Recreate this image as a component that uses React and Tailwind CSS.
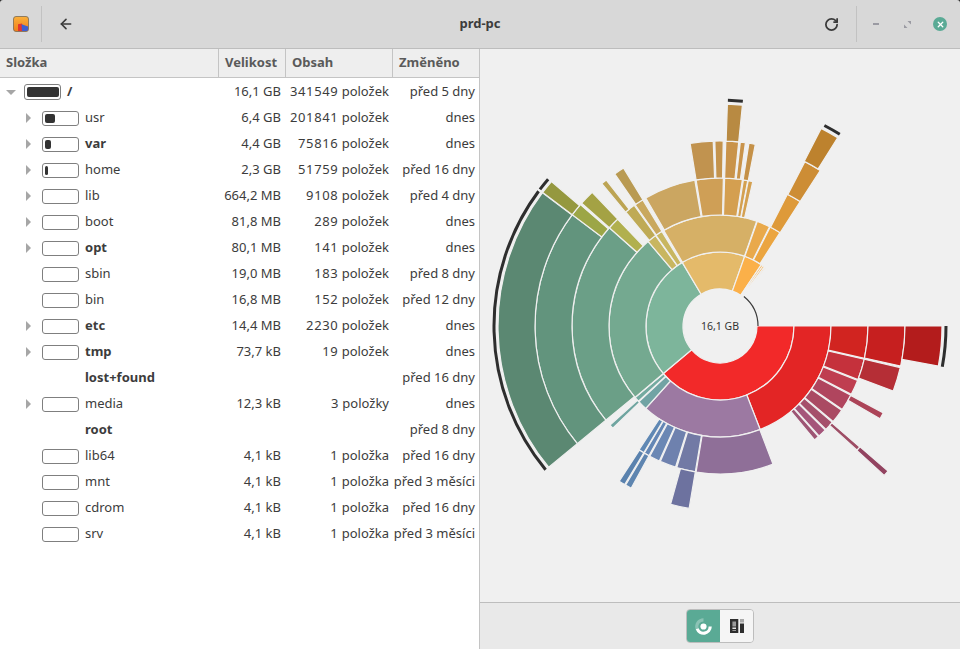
import React from "react";
import { ArrowLeft, RotateCw, X } from "lucide-react";

const CX = 240;
const CY = 277;
const RING = 37;

// [ring, from, to, colour] — angles clockwise from 3 o'clock
const SEGMENTS = [
  // ring 1
  [1, 0, 140, "#f22929"],
  [1, 140, 239.3, "#7db59b"],
  [1, 239.3, 289.5, "#e4ba6a"],
  [1, 289.5, 304, "#fbb049"],
  [1, 304, 305.5, "#fbb049"],
  [1, 305.5, 307, "#fbb049"],
  [1, 307, 308, "#fbb049"],
  // ring 2
  [2, 0, 68.8, "#e32525"],
  [2, 68.8, 132, "#9c79a2"],
  [2, 132, 137, "#71a3a4"],
  [2, 137.3, 139.8, "#74aaa0"],
  [2, 140, 229.6, "#74a990"],
  [2, 229.6, 234.5, "#c8b660"],
  [2, 234.8, 238.4, "#c8b660"],
  [2, 239.5, 289.3, "#d6b066"],
  [2, 289.6, 296.5, "#e9a94b"],
  [2, 296.9, 302.7, "#eba540"],
  // ring 3
  [3, 0, 12.6, "#d12420"],
  [3, 13, 21.2, "#c5313c"],
  [3, 21.6, 27.5, "#bf3e50"],
  [3, 27.9, 34.3, "#b0455e"],
  [3, 34.7, 40.2, "#aa4a63"],
  [3, 40.6, 44.3, "#a5506b"],
  [3, 44.7, 48, "#a5557a"],
  [3, 48.3, 50.3, "#9e5574"],
  [3, 69, 99.3, "#8f6f98"],
  [3, 99.6, 107, "#727aa5"],
  [3, 107.5, 113.8, "#6e81ae"],
  [3, 114.2, 118.3, "#6a87b4"],
  [3, 118.7, 120.8, "#6487b5"],
  [3, 121, 123.2, "#5f88b4"],
  [3, 136.4, 138, "#6fa5a0"],
  [3, 140.5, 221.6, "#6b9f87"],
  [3, 221.6, 226.2, "#b1b04e"],
  [3, 230.4, 234.6, "#bfaa55"],
  [3, 235, 238.5, "#c9a85e"],
  [3, 239.9, 260.2, "#cba661"],
  [3, 260.7, 271.3, "#cf9f56"],
  [3, 271.8, 278.7, "#d49f50"],
  [3, 279.1, 280.8, "#d4a050"],
  [3, 281, 282.8, "#d4a050"],
  [3, 297.1, 302.8, "#de9a3a"],
  // ring 4
  [4, 0, 12.5, "#c61f1f"],
  [4, 13, 20.6, "#b52e36"],
  [4, 28, 30.1, "#ac4458"],
  [4, 40.9, 42.2, "#9e4d65"],
  [4, 99.6, 105.5, "#6d729f"],
  [4, 118.7, 120.7, "#5e85b0"],
  [4, 121, 123, "#5a82ae"],
  [4, 140.5, 217, "#62947d"],
  [4, 217, 221, "#9ca646"],
  [4, 221.6, 226.3, "#a4a244"],
  [4, 230.3, 232.1, "#bca453"],
  [4, 235.3, 238.6, "#b99a52"],
  [4, 260.7, 267.9, "#c1934f"],
  [4, 268.4, 271, "#c4934c"],
  [4, 271.8, 275.8, "#c9934a"],
  [4, 276.3, 277.9, "#c9934a"],
  [4, 279, 281, "#c59148"],
  [4, 297.3, 302.8, "#cd8d35"],
  // ring 5
  [5, 0, 10.4, "#b31c1c"],
  [5, 40.8, 42.3, "#924360"],
  [5, 140.5, 216.9, "#5b8872"],
  [5, 217, 220.6, "#95983f"],
  [5, 271.9, 275.8, "#b88a42"],
  [5, 297.1, 302, "#bd822e"],
];

// arcs over children that are too small to draw
const HIDDEN_ARCS = [
  [226, 0, 10.4],
  [226, 140.5, 216.6],
  [226, 217.2, 220.5],
  [226, 272, 275.8],
  [226, 297.5, 302],
];

const ROWS = [
  { name: "/", size: "16,1 GB", items: "341549 položek", changed: "před 5 dny", bold: true, fill: 32, root: true },
  { name: "usr", size: "6,4 GB", items: "201841 položek", changed: "dnes", fill: 10, arrow: true },
  { name: "var", size: "4,4 GB", items: "75816 položek", changed: "dnes", fill: 6, arrow: true, bold: true },
  { name: "home", size: "2,3 GB", items: "51759 položek", changed: "před 16 dny", fill: 3, arrow: true },
  { name: "lib", size: "664,2 MB", items: "9108 položek", changed: "před 4 dny", arrow: true },
  { name: "boot", size: "81,8 MB", items: "289 položek", changed: "dnes", arrow: true },
  { name: "opt", size: "80,1 MB", items: "141 položek", changed: "dnes", arrow: true, bold: true },
  { name: "sbin", size: "19,0 MB", items: "183 položek", changed: "před 8 dny" },
  { name: "bin", size: "16,8 MB", items: "152 položek", changed: "před 12 dny" },
  { name: "etc", size: "14,4 MB", items: "2230 položek", changed: "dnes", arrow: true, bold: true },
  { name: "tmp", size: "73,7 kB", items: "19 položek", changed: "dnes", arrow: true, bold: true },
  { name: "lost+found", changed: "před 16 dny", bold: true, noBar: true },
  { name: "media", size: "12,3 kB", items: "3 položky", changed: "dnes", arrow: true },
  { name: "root", changed: "před 8 dny", bold: true, noBar: true },
  { name: "lib64", size: "4,1 kB", items: "1 položka", changed: "před 16 dny" },
  { name: "mnt", size: "4,1 kB", items: "1 položka", changed: "před 3 měsíci" },
  { name: "cdrom", size: "4,1 kB", items: "1 položka", changed: "před 16 dny" },
  { name: "srv", size: "4,1 kB", items: "1 položka", changed: "před 3 měsíci" },
];

function polar(r, deg) {
  const a = (deg * Math.PI) / 180;
  return [(CX + r * Math.cos(a)).toFixed(2), (CY + r * Math.sin(a)).toFixed(2)];
}

function sectorPath(r0, r1, from, to) {
  const large = to - from > 180 ? 1 : 0;
  const [ax, ay] = polar(r1, from);
  const [bx, by] = polar(r1, to);
  const [cx, cy] = polar(r0, to);
  const [dx, dy] = polar(r0, from);
  return `M${ax} ${ay}A${r1} ${r1} 0 ${large} 1 ${bx} ${by}L${cx} ${cy}A${r0} ${r0} 0 ${large} 0 ${dx} ${dy}Z`;
}

function arcPath(r, from, to) {
  const [ax, ay] = polar(r, from);
  const [bx, by] = polar(r, to);
  return `M${ax} ${ay}A${r} ${r} 0 ${to - from > 180 ? 1 : 0} 1 ${bx} ${by}`;
}

function Sunburst() {
  return (
    <svg width="480" height="553" viewBox="0 0 480 553" className="block">
      {SEGMENTS.map(([ring, from, to, color], i) => (
        <path
          key={i}
          d={sectorPath(ring * RING, (ring + 1) * RING, from, to)}
          fill={color}
          stroke="#f0f0f0"
          strokeWidth="1.2"
        />
      ))}
      {HIDDEN_ARCS.map(([r, from, to], i) => (
        <path key={i} d={arcPath(r, from, to)} fill="none" stroke="#2e2e2e" strokeWidth="3" />
      ))}
      <path d={arcPath(38, 309, 360)} fill="none" stroke="#3a3a3a" strokeWidth="1.2" />
      <text x={CX} y={CY + 4} textAnchor="middle" fontSize="10.5" fill="#333333">
        16,1 GB
      </text>
    </svg>
  );
}

function AppIcon() {
  return (
    <svg width="16" height="16" viewBox="0 0 16 16">
      <defs>
        <linearGradient id="appicon" x1="0" y1="0" x2="0" y2="1">
          <stop offset="0" stopColor="#fbb03b" />
          <stop offset="1" stopColor="#ef7f1a" />
        </linearGradient>
      </defs>
      <rect x="0.5" y="0.5" width="15" height="15" rx="2.5" fill="url(#appicon)" stroke="#7a6a52" strokeWidth="0.8" />
      <path d="M5 15V8.2L9 7.4L10 15Z" fill="#e2352f" />
      <path d="M9 15L8.6 8.2L15 10.6V13.5Q15 15 13.5 15Z" fill="#3f5fd0" />
    </svg>
  );
}

function ChartIcon() {
  return (
    <svg width="17" height="17" viewBox="0 0 16 16">
      <path d="M15.8 8A7.8 7.8 0 0 1 .67 10.67L3.49 9.64A4.8 4.8 0 0 0 12.8 8Z" fill="#ffffff" />
      <path d="M.67 10.67A7.8 7.8 0 0 1 8 .2V3.2A4.8 4.8 0 0 0 3.49 9.64Z" fill="#ffffff" fillOpacity="0.3" />
      <circle cx="8" cy="8" r="2.9" fill="#ffffff" />
    </svg>
  );
}

function TreemapIcon() {
  return (
    <svg width="14" height="14" viewBox="0 0 14 14">
      <path d="M0 0h8.3v14H0z" fill="#2e2e2e" />
      <path d="M2.4 2.4h3.6v5H2.4z" fill="#9a9a9a" />
      <path d="M2.4 8.6h3.6v1.4H2.4z" fill="#e6e6e6" />
      <path d="M2.4 11h3.6v1H2.4z" fill="#9a9a9a" />
      <path d="M10 0h4v3.4h-4z" fill="#a8a8a8" />
      <path d="M10 4.4h4V14h-4z" fill="#2e2e2e" />
    </svg>
  );
}

function DiskBar({ fill, root }) {
  return (
    <div className={`w-[37px] rounded-[3px] border border-[#7f7f7f] bg-white p-[2px] ${root ? "h-[16px]" : "h-[15px]"}`}>
      {fill ? <div className="h-full rounded-[2px] bg-[#333333]" style={{ width: fill }} /> : null}
    </div>
  );
}

function Row({ row }) {
  // digits run wider in the original font
  const [count, unit] = row.items ? row.items.split(" ") : [];
  return (
    <div className="flex h-[26px] items-center text-[13px] text-[#3c3c3c]">
      <div className={`flex w-[218px] items-center ${row.root ? "pl-[4px]" : "pl-[22px]"}`}>
        <div className="flex w-[13px] justify-center">
          {row.arrow ? <div className="h-0 w-0 border-y-[5px] border-l-[5px] border-y-transparent border-l-[#a6a6a6]" /> : null}
          {row.root ? <div className="h-0 w-0 border-x-[5px] border-t-[5px] border-x-transparent border-t-[#a6a6a6]" /> : null}
        </div>
        <div className="ml-[7px] w-[37px]">{row.noBar ? null : <DiskBar fill={row.fill} root={row.root} />}</div>
        <span className={`ml-[6px] ${row.bold ? "font-bold" : ""}`}>{row.name}</span>
      </div>
      <div className="w-[63px] text-right">{row.size}</div>
      <div className="w-[108px] text-right">
        {count ? (
          <>
            <span className="tracking-[0.6px]">{count}</span> {unit}
          </>
        ) : null}
      </div>
      <div className="w-[86px] text-right">{row.changed}</div>
    </div>
  );
}

function HeaderCell({ className, children }) {
  return <div className={`flex h-full items-center border-r border-[#c4c4c4] px-[6px] ${className}`}>{children}</div>;
}

export default function App() {
  return (
    <div className="flex h-[649px] w-[960px] flex-col overflow-hidden bg-[#222222] font-['Noto_Sans',sans-serif]">
      {/* TITLE BAR */}
      <header className="flex h-[49px] shrink-0 items-center rounded-t-[3px] border-b border-[#bdbdbd] bg-[#d8d8d8]">
        <div className="flex w-[41px] justify-center">
          <AppIcon />
        </div>
        <div className="h-[36px] w-px bg-[#c2c2c2]" />
        <div className="flex w-[48px] justify-center">
          <ArrowLeft size={16} strokeWidth={2.4} className="text-[#3a3a3a]" />
        </div>
        <div className="flex-1 pl-[46px] text-center text-[13px] font-bold text-[#3c3c3c]">prd-pc</div>
        <RotateCw size={15} strokeWidth={2.8} className="text-[#3a3a3a]" />
        <div className="ml-[17px] h-[36px] w-px bg-[#c2c2c2]" />
        <div className="ml-[16px] h-[2px] w-[6px] bg-[#9a9aa2]" />
        <svg width="7" height="7" viewBox="0 0 7 7" className="ml-[25px]">
          <path d="M0 3.5V7H3.5ZM3.5 0H7V3.5Z" fill="#9a9aa2" />
        </svg>
        <div className="ml-[22px] mr-[13px] flex h-[14px] w-[14px] items-center justify-center rounded-full bg-[#5aaa95]">
          <X size={9} strokeWidth={3.5} className="text-white" />
        </div>
      </header>

      <div className="flex min-h-0 flex-1">
        {/* TREE */}
        <div className="w-[480px] shrink-0 border-r border-[#c4c4c4] bg-white">
          <div className="flex h-[29px] items-center border-b border-[#c4c4c4] bg-[#eeeeee] text-[13px] font-bold text-[#5a5a5a]">
            <HeaderCell className="w-[219px]">Složka</HeaderCell>
            <HeaderCell className="w-[67px]">Velikost</HeaderCell>
            <HeaderCell className="w-[107px]">Obsah</HeaderCell>
            <div className="px-[6px]">Změněno</div>
          </div>
          <div className="pt-px">
            {ROWS.map((row) => (
              <Row key={row.name} row={row} />
            ))}
          </div>
        </div>

        {/* CHART */}
        <div className="flex min-w-0 flex-1 flex-col">
          <div className="flex-1 overflow-hidden bg-[#f0f0f0]">
            <Sunburst />
          </div>
          <div className="flex h-[47px] shrink-0 items-center justify-center border-t border-[#bdbdbd] bg-[#e9e9e9]">
            <div className="flex h-[34px] overflow-hidden rounded-[4px] border border-[#bdbdbd]">
              <div className="flex w-[33px] items-center justify-center bg-[#5aaa95]">
                <ChartIcon />
              </div>
              <div className="flex w-[33px] items-center justify-center bg-[#f5f5f5]">
                <TreemapIcon />
              </div>
            </div>
          </div>
        </div>
      </div>
    </div>
  );
}
